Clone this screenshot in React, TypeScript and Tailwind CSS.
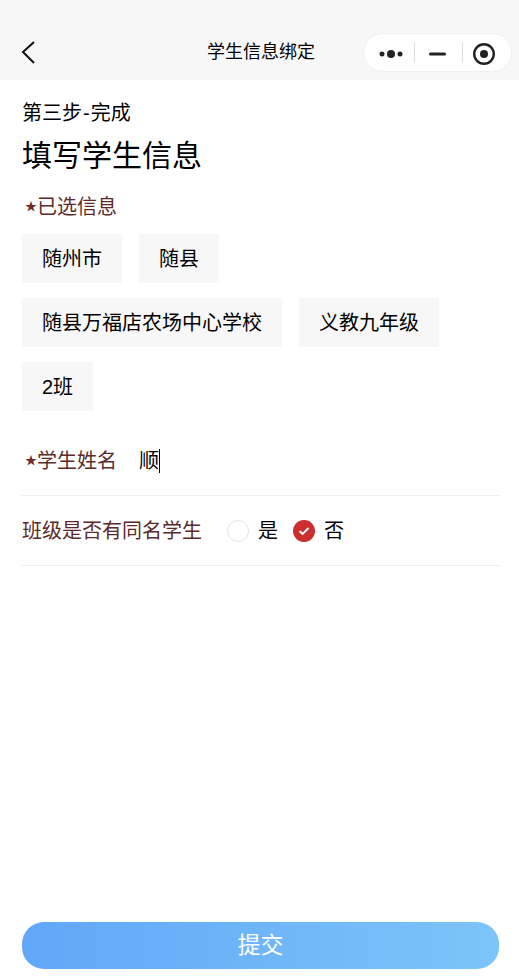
import React from 'react';

const FONT = "font-['Liberation_Sans','Noto_Sans_CJK_SC',sans-serif]";

const rows = [['随州市', '随县'], ['随县万福店农场中心学校', '义教九年级'], ['2班']];

function Chip({ label }: { label: string }) {
  return <div className="flex h-[49px] items-center bg-[#f7f7f7] px-5 text-[20px] text-black">{label}</div>;
}

function Star() {
  return <span className="inline-block w-3 align-[3px] text-[12px] leading-none text-[#6e2b2b]">★</span>;
}

function Capsule() {
  return (
    <div className="flex h-[39px] w-[149px] items-center rounded-full border border-[#f0f0f0] bg-white">
      <svg width="40" height="20" viewBox="0 0 40 20" className="ml-[10px] mt-[2px]">
        <circle cx="8" cy="10" r="2.5" fill="#222" />
        <circle cx="17" cy="10" r="4" fill="#222" />
        <circle cx="26" cy="10" r="2.5" fill="#222" />
      </svg>
      <div className="h-[21px] w-px bg-[#dcdcdc]" />
      <svg width="47" height="20" viewBox="0 0 47 20" className="mt-[2px]">
        <rect x="14" y="8.5" width="17" height="3" rx="1.5" fill="#222" />
      </svg>
      <div className="h-[21px] w-px bg-[#dcdcdc]" />
      <svg width="24" height="24" viewBox="0 0 24 24" className="ml-[9px] mt-[2px]">
        <circle cx="12" cy="12" r="9.8" fill="none" stroke="#222" strokeWidth="2.4" />
        <circle cx="12" cy="12" r="4" fill="#222" />
      </svg>
    </div>
  );
}

export default function App() {
  return (
    <div className={`${FONT} flex h-[978px] w-[519px] flex-col bg-white`}>
      <div className="flex h-20 items-end bg-[#f7f7f7] pb-[8px]">
        <div className="flex w-[168px] items-center pb-[8px] pl-[20px]">
          <svg width="16" height="24" viewBox="0 0 16 24">
            <path d="M14 2 L3 12 L14 23" fill="none" stroke="#111" strokeWidth="2" />
          </svg>
        </div>
        <div className="w-[186px] pb-[7px] text-center text-[18px] leading-[26px] text-black">学生信息绑定</div>
        <div className="ml-[9px]">
          <Capsule />
        </div>
      </div>

      <div className="flex flex-1 flex-col px-[22px] pb-[9px]">
        <div className="mt-[19px] text-[20px] leading-[28px] text-black">
          第三步<span className="px-px">-</span>完成
        </div>
        <div className="mt-[8px] text-[30px] leading-[42px] text-black">填写学生信息</div>
        <div className="mt-[16px] pl-[3px] text-[20px] leading-[28px] text-[#5c2a2a]">
          <Star />已选信息
        </div>
        <div className="mt-[13px] flex flex-col gap-[15px]">
          {rows.map((row, i) => (
            <div key={i} className="flex gap-[17px]">
              {row.map((label) => (
                <Chip key={label} label={label} />
              ))}
            </div>
          ))}
        </div>

        <div className="-ml-px -mr-[3px] mt-[25px] flex h-[60px] items-center border-b border-[#f0f0f0] pb-[9px] pl-[4px] text-[20px]">
          <div className="w-[114px] text-[#5c2a2a]">
            <Star />学生姓名
          </div>
          <div className="text-black">顺</div>
          <div className="h-6 w-px bg-black" />
        </div>

        <div className="-ml-px -mr-[3px] flex h-[70px] items-center border-b border-[#f0f0f0] pl-px text-[20px]">
          <div className="w-[205px] text-[#5c2a2a]">班级是否有同名学生</div>
          <div className="h-[22px] w-[22px] rounded-full border border-[#e4e4e4] bg-white" />
          <div className="ml-[9px] text-black">是</div>
          <div className="ml-[15px] flex h-[22px] w-[22px] items-center justify-center rounded-full bg-[#c9302f]">
            <svg width="12" height="10" viewBox="0 0 12 10">
              <path d="M1.5 5 L4.6 8 L10.5 2" fill="none" stroke="#fff" strokeWidth="1.8" />
            </svg>
          </div>
          <div className="ml-[9px] text-black">否</div>
        </div>

        <div className="mt-auto flex h-[47px] w-[477px] items-center justify-center rounded-[22px] bg-gradient-to-r from-[#62a6f8] to-[#7cc4f8] text-[23px] text-white">
          提交
        </div>
      </div>
    </div>
  );
}
